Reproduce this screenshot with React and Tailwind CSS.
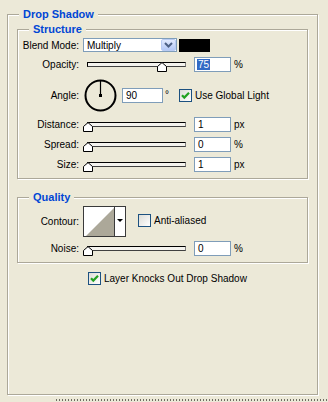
import React from "react";

function Checkbox({ checked }) {
  return (
    <div className="w-[13px] h-[13px] shrink-0 border border-[#1C5180] bg-[linear-gradient(135deg,#dcdcd7,#ffffff)] flex items-center justify-center">
      {checked && (
        <svg width="11" height="11" viewBox="0 0 11 11">
          <path d="M2 5.2L4.3 7.6L9 2.8" fill="none" stroke="#21A121" strokeWidth="2.2" />
        </svg>
      )}
    </div>
  );
}

function Field({ value, selected, w = "w-[37px]" }) {
  return (
    <div className={"h-[15px] shrink-0 border border-[#7F9DB9] bg-white pl-[2px] flex items-center leading-[11px] " + w}>
      {selected ? (
        <span className="bg-[#316AC5] text-white px-[1px]">{value}</span>
      ) : (
        <span className="px-[1px]">{value}</span>
      )}
    </div>
  );
}

function Slider({ pos }) {
  return (
    <div className="relative w-[103px] h-[15px] shrink-0">
      <div className="ml-[4px] mt-[5px] h-[5px] border border-black border-r-[#808080] border-b-[#404040] bg-[#f4f3ee]" />
      <svg className="absolute top-[5px]" style={{ left: pos }} width="10" height="10" viewBox="0 0 10 10">
        <path d="M0.5 9.5V4.5L5 0.6L9.5 4.5V9.5Z" fill="#fff" stroke="#000" />
      </svg>
    </div>
  );
}

function Row({ label, children, className = "" }) {
  return (
    <div className={"flex items-center " + className}>
      <div className="w-[61px] shrink-0 text-right">{label}</div>
      <div className="ml-[4px] flex items-center h-full">{children}</div>
    </div>
  );
}

function SliderRow({ label, pos, value, unit, selected, className }) {
  return (
    <Row label={label} className={"h-[15px] " + className}>
      <Slider pos={pos} />
      <div className="ml-[8px]">
        <Field value={value} selected={selected} />
      </div>
      <span className="ml-[3px]">{unit}</span>
    </Row>
  );
}

const box =
  "border border-[#ACA899] shadow-[inset_1px_1px_0_#fff,1px_1px_0_#fff]";
const legend =
  "ml-[11px] px-[4px] h-[12px] leading-[12px] bg-[#ECE9D8] font-bold text-[11px] text-[#0046D5]";

export default function App() {
  return (
    <div className="w-[328px] h-[402px] bg-[#ECE9D8] overflow-hidden text-[10px] text-black font-['Liberation_Sans',Arial,sans-serif] pt-[8px]">
      <fieldset className={"ml-[7px] w-[311px] h-[387px] " + box}>
        <legend className={legend}>Drop Shadow</legend>

        <fieldset className={"ml-[9px] mt-[3px] w-[291px] pb-[6px] " + box}>
          <legend className={legend}>Structure</legend>

          <Row label="Blend Mode:" className="h-[14px] mt-[3px]">
            <div className="w-[94px] h-[14px] border border-[#7F9DB9] bg-white flex items-center">
              <span className="flex-1 pl-[3px] leading-[11px]">Multiply</span>
              <div className="w-[15px] h-[12px] rounded-[2px] border border-[#B9CBF3] bg-[linear-gradient(#e2eafe,#b4c8f6)] flex items-center justify-center">
                <svg width="9" height="6" viewBox="0 0 9 6">
                  <path d="M1 1L4.5 4.5L8 1" fill="none" stroke="#4D6185" strokeWidth="2" />
                </svg>
              </div>
            </div>
            <div className="ml-[2px] w-[31px] h-[13px] bg-black" />
          </Row>

          <SliderRow label="Opacity:" pos={74} value="75" unit="%" selected className="mt-[5px]" />

          <Row label="Angle:" className="h-[33px] mt-[7px]">
            <svg className="ml-[1px] shrink-0" width="33" height="33" viewBox="0 0 33 33">
              <circle cx="16.5" cy="16.5" r="15" fill="none" stroke="#000" strokeWidth="2" />
              <line x1="16.5" y1="16.5" x2="16.5" y2="2" stroke="#000" strokeWidth="1.2" />
              <rect x="15" y="15" width="3" height="3" fill="#000" />
            </svg>
            <div className="ml-[5px]">
              <Field value="90" w="w-[41px]" />
            </div>
            <span className="ml-[2px] w-[14px] self-start mt-[11px] leading-[10px]">°</span>
            <Checkbox checked />
            <span className="ml-[3px]">Use Global Light</span>
          </Row>

          <SliderRow label="Distance:" pos={0} value="1" unit="px" className="mt-[5px]" />
          <SliderRow label="Spread:" pos={0} value="0" unit="%" className="mt-[5px]" />
          <SliderRow label="Size:" pos={0} value="1" unit="px" className="mt-[5px]" />
        </fieldset>

        <fieldset className={"ml-[9px] mt-[12px] w-[291px] pb-[6px] " + box}>
          <legend className={legend}>Quality</legend>

          <Row label="Contour:" className="h-[31px] mt-[3px]">
            <svg className="shrink-0" width="43" height="31" viewBox="0 0 43 31">
              <rect x="0.5" y="0.5" width="42" height="30" fill="#fff" stroke="#3a3a3a" />
              <polygon points="3,30 31,2 31,30" fill="#ACA899" />
              <line x1="31.5" y1="1" x2="31.5" y2="30" stroke="#3a3a3a" />
              <polygon points="34,13 40,13 37,16" fill="#000" />
            </svg>
            <div className="ml-[12px] self-start mt-[7px] flex items-center">
              <Checkbox />
              <span className="ml-[3px]">Anti-aliased</span>
            </div>
          </Row>

          <SliderRow label="Noise:" pos={0} value="0" unit="%" className="mt-[4px]" />
        </fieldset>

        <div className="mt-[9px] ml-[80px] h-[13px] flex items-center">
          <Checkbox checked />
          <span className="ml-[3px]">Layer Knocks Out Drop Shadow</span>
        </div>
      </fieldset>

      <div className="mt-[4px] ml-[56px] h-[2px] bg-[repeating-linear-gradient(90deg,#6f6d62_0_1px,#ECE9D8_1px_3px)]" />
    </div>
  );
}
